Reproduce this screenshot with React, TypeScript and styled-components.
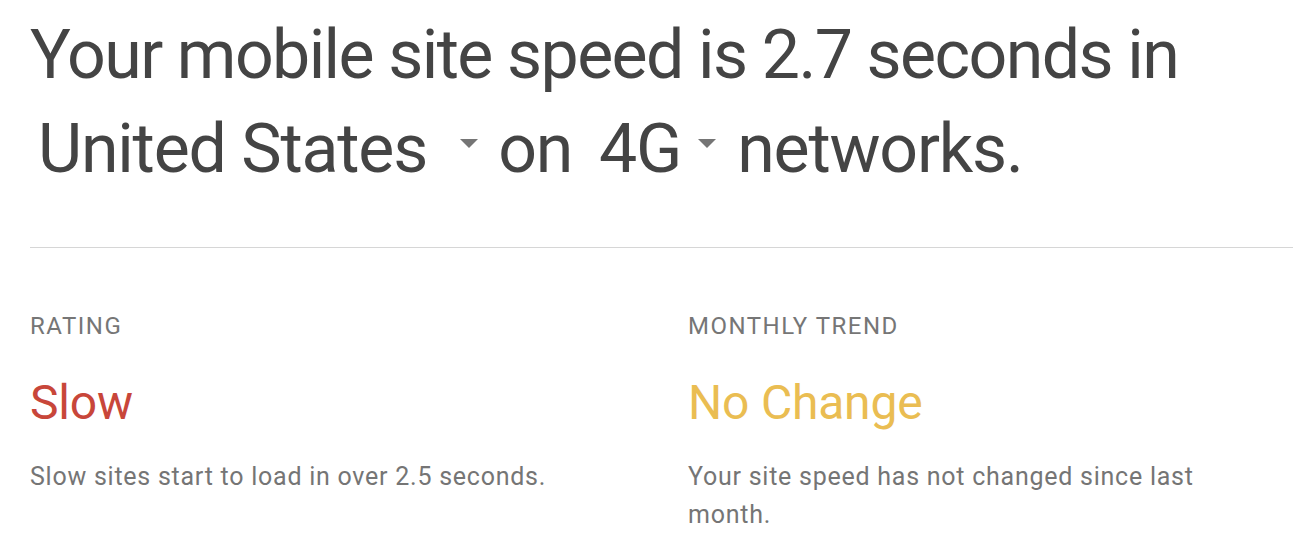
import React from "react";
import styled, { createGlobalStyle } from "styled-components";

const Global = createGlobalStyle`
  html, body { margin: 0; padding: 0; background: #ffffff; }
  body { font-family: Roboto, "Noto Sans", sans-serif; }
`;

const Page = styled.div`
  width: 1263px;
  padding: 8px 0 0 30px;
`;

const Headline = styled.h1`
  margin: 0;
  font-size: 68px;
  line-height: 94px;
  font-weight: 400;
  color: #444444;
`;

const Line = styled.div<{ $spacing: number }>`
  display: flex;
  align-items: baseline;
  letter-spacing: ${(p) => p.$spacing}px;
`;

const Select = styled.span`
  display: inline-flex;
  align-items: center;
  padding-left: 8px;
`;

const Arrow = styled.span<{ $gap: number }>`
  display: inline-block;
  width: 0;
  height: 0;
  margin-left: ${(p) => p.$gap}px;
  border-left: 9px solid transparent;
  border-right: 9px solid transparent;
  border-top: 9px solid #757575;
  transform: translateY(-6px);
`;

const Word = styled.span<{ $ml: number }>`
  margin-left: ${(p) => p.$ml}px;
`;

const Divider = styled.hr`
  margin: 51px 0 0 0;
  border: 0;
  border-top: 1px solid #d6d6d6;
  height: 0;
`;

const Stats = styled.div`
  display: grid;
  grid-template-columns: 658px 1fr;
  padding-top: 63px;
`;

const Stat = styled.div`
  display: flex;
  flex-direction: column;
`;

const Label = styled.div`
  font-size: 24px;
  line-height: 30px;
  letter-spacing: 1.5px;
  color: #767676;
  text-transform: uppercase;
`;

const Value = styled.div<{ $color: string }>`
  margin-top: 34px;
  font-size: 48px;
  line-height: 56px;
  color: ${(p) => p.$color};
  letter-spacing: -0.2px;
`;

const Desc = styled.div`
  margin-top: 27px;
  font-size: 25px;
  line-height: 38px;
  letter-spacing: 0.75px;
  color: #757575;
  max-width: 540px;
`;

export default function App() {
  return (
    <>
      <Global />
      <Page>
        <Headline>
          <Line $spacing={-1.6}>Your mobile site speed is 2.7 seconds in</Line>
          <Line $spacing={-1.2}>
            <Select>
              United States
              <Arrow $gap={33} />
            </Select>
            <Word $ml={20}>on</Word>
            <Select>
              <Word $ml={19}>4G</Word>
              <Arrow $gap={17} />
            </Select>
            <Word $ml={21}>networks.</Word>
          </Line>
        </Headline>
        <Divider />
        <Stats>
          <Stat>
            <Label>Rating</Label>
            <Value $color="#c8463a">Slow</Value>
            <Desc>Slow sites start to load in over 2.5 seconds.</Desc>
          </Stat>
          <Stat>
            <Label>Monthly Trend</Label>
            <Value $color="#eabd52">No Change</Value>
            <Desc>Your site speed has not changed since last month.</Desc>
          </Stat>
        </Stats>
      </Page>
    </>
  );
}
